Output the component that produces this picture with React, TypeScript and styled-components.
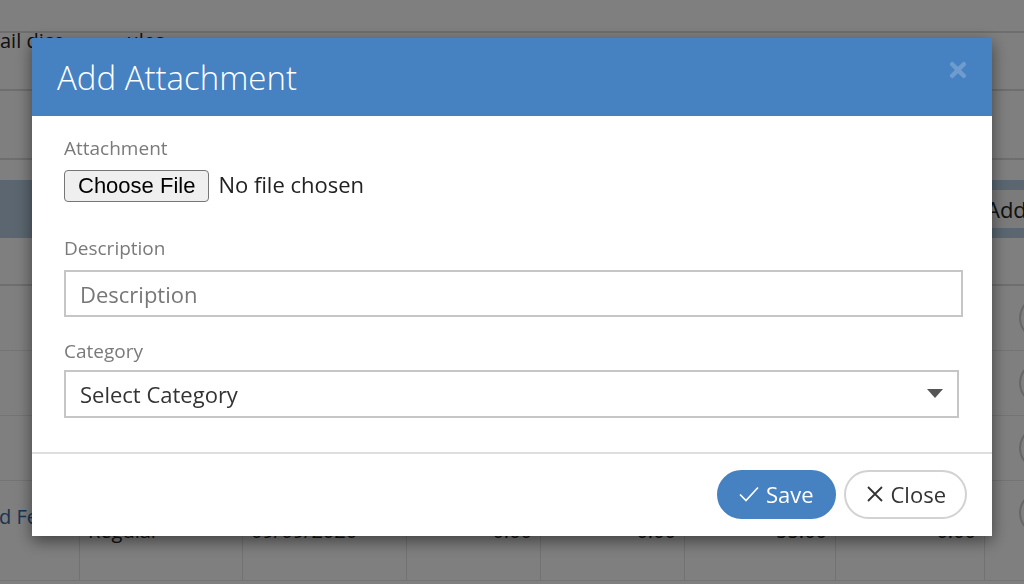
import styled, {createGlobalStyle} from "styled-components";
import {FaTimes} from "react-icons/fa";

const GlobalStyle = createGlobalStyle`
  * { box-sizing: border-box; }
  html, body { margin: 0; padding: 0; }
  body {
    font-family: "Open Sans", "Liberation Sans", sans-serif;
    background: #fff;
    color: #333;
    overflow: hidden;
  }
`;

/* ---------- page behind the modal ---------- */

const Page = styled.div`
  width: 1024px;
  height: 584px;
  overflow: hidden;
  display: flex;
  flex-direction: column;
`;

const TopRow = styled.div`
  height: 33px;
  border-bottom: 2px solid #dcdcdc;
`;

const InfoRow = styled.div<{$h: number}>`
  height: ${p => p.$h}px;
  border-bottom: 2px solid #dcdcdc;
  display: flex;
  align-items: flex-start;
  gap: 62px;
  font-size: 20px;
  line-height: 1;
  color: #222;
  span { margin-top: -2px; }
`;

const Toolbar = styled.div`
  margin-top: 20px;
  height: 58px;
  background: #b6cde0;
  display: flex;
  justify-content: flex-end;
  align-items: center;
`;

const AddButton = styled.div`
  width: 42px;
  height: 38px;
  background: #f6f6f6;
  border-radius: 4px 0 0 4px;
  font-size: 22px;
  line-height: 38px;
  padding-left: 4px;
  color: #222;
  overflow: hidden;
`;

const TableHead = styled.div`
  height: 48px;
  border-bottom: 2px solid #dcdcdc;
`;

const Row = styled.div<{$h?: number}>`
  height: ${p => p.$h ?? 65}px;
  display: grid;
  grid-template-columns: 80px 163px 164px 134px 144px 151px 149px 1fr;
  border-bottom: 1px solid #e8e8e8;
`;

const Cell = styled.div<{$right?: boolean}>`
  border-right: 1px solid #e4e4e4;
  padding: 0 8px;
  display: flex;
  align-items: center;
  justify-content: ${p => (p.$right ? "flex-end" : "flex-start")};
  font-size: 20px;
  color: #222;
  white-space: nowrap;
  overflow: hidden;
`;

const LinkCell = styled(Cell)`
  padding: 22px 0 0 0;
  align-items: flex-start;
  color: #2f6aa8;
  span { margin-left: -74px; }
`;

const RoundAction = styled.div`
  width: 44px;
  height: 44px;
  margin-left: 34px;
  margin-top: 10px;
  border-radius: 50%;
  border: 2px solid #cfcfcf;
`;

/* ---------- modal ---------- */

const Overlay = styled.div`
  position: fixed;
  inset: 0;
  background: rgba(0, 0, 0, 0.5);
  display: flex;
  justify-content: center;
  align-items: flex-start;
  padding-top: 38px;
`;

const Modal = styled.div`
  width: 960px;
  background: #fff;
  box-shadow: 0 5px 15px rgba(0, 0, 0, 0.5);
  display: flex;
  flex-direction: column;
`;

const Header = styled.div`
  height: 78px;
  background: #4681c2;
  display: flex;
  align-items: center;
  justify-content: space-between;
  padding: 0 22px 0 25px;
`;

const Title = styled.h4`
  margin: 0;
  font-size: 33px;
  font-weight: 300;
  color: #fff;
`;

const HeaderClose = styled.button`
  border: 0;
  background: none;
  padding: 0;
  display: flex;
  color: rgba(255, 255, 255, 0.22);
  margin-top: -14px;
`;

const Body = styled.div`
  padding: 19px 29px 34px 32px;
  display: flex;
  flex-direction: column;
`;

const FormGroup = styled.div<{$gap?: number}>`
  display: flex;
  flex-direction: column;
  margin-bottom: ${p => p.$gap ?? 19}px;
`;

const Label = styled.label<{$below?: number}>`
  font-size: 19px;
  line-height: 1.4;
  color: #7a7a7a;
  margin-bottom: ${p => p.$below ?? 7}px;
`;

const FileInput = styled.input`
  font-family: "Open Sans", sans-serif;
  font-size: 22px;
  color: #222;
  height: 34px;
  padding: 0;
  &::file-selector-button {
    font-family: "Liberation Sans", Arial, sans-serif;
    font-size: 22px;
    height: 32px;
    padding: 0 13px;
    margin: 0 9px 0 0;
    background: #efefef;
    border: 1px solid #767676;
    border-radius: 4px;
    color: #000;
  }
`;

const TextInput = styled.input`
  height: 47px;
  border: 2px solid #c6c6c6;
  padding: 0 14px;
  font-family: "Open Sans", sans-serif;
  font-size: 22px;
  color: #333;
  outline: none;
  &::placeholder { color: #777; }
`;

const SelectWrap = styled.div`
  position: relative;
  margin-right: 4px;
`;

const Select = styled.select`
  width: 100%;
  height: 48px;
  appearance: none;
  border: 2px solid #c6c6c6;
  border-radius: 0;
  background: #fff;
  padding: 0 14px;
  font-family: "Open Sans", sans-serif;
  font-size: 22px;
  color: #333;
  outline: none;
`;

const Caret = styled.svg`
  position: absolute;
  right: 16px;
  top: 19px;
  pointer-events: none;
`;

const Footer = styled.div`
  border-top: 2px solid #dedede;
  padding: 16px 25px 17px;
  display: flex;
  justify-content: flex-end;
  gap: 8px;
`;

const Button = styled.button<{$primary?: boolean}>`
  height: 49px;
  border-radius: 25px;
  padding: ${p => (p.$primary ? "0 20px" : "0 19px 0 21px")};
  display: flex;
  align-items: center;
  gap: ${p => (p.$primary ? 7 : 8)}px;
  font-family: "Open Sans", sans-serif;
  font-size: 22px;
  background: ${p => (p.$primary ? "#4681c2" : "#fff")};
  color: ${p => (p.$primary ? "#fff" : "#333")};
  border: 2px solid ${p => (p.$primary ? "#4681c2" : "#d2d2d2")};
  svg { flex: none; }
`;

const CheckIcon = () => (
  <svg width="20" height="16" viewBox="0 0 20 16" fill="none" stroke="currentColor" strokeWidth="1.7">
    <path d="M1 8.5l6 6L19 1.5" />
  </svg>
);

const CrossIcon = () => (
  <svg width="16" height="16" viewBox="0 0 16 16" fill="none" stroke="currentColor" strokeWidth="1.8">
    <path d="M1 1l14 14M15 1L1 15" />
  </svg>
);

const rows = [
  ["", "", "", "", "", "", ""],
  ["", "", "", "", "", "", ""],
  ["", "", "", "", "", "", ""],
  ["Standard Fee", "Regular", "09/09/2020", "0.00", "0.00", "55.00", "0.00"],
];

function App() {
  return (
    <>
      <GlobalStyle />
      <Page>
        <TopRow />
        <InfoRow $h={58}>
          <span>ail dice</span>
          <span>ules</span>
        </InfoRow>
        <InfoRow $h={69} />
        <Toolbar>
          <AddButton>Add</AddButton>
        </Toolbar>
        <TableHead />
        {rows.map((r, i) => (
          <Row key={i} $h={i === 3 ? 100 : 65}>
            <LinkCell>
              <span>{r[0]}</span>
            </LinkCell>
            <Cell>{r[1]}</Cell>
            <Cell>{r[2]}</Cell>
            <Cell $right>{r[3]}</Cell>
            <Cell $right>{r[4]}</Cell>
            <Cell $right>{r[5]}</Cell>
            <Cell $right>{r[6]}</Cell>
            <RoundAction />
          </Row>
        ))}
      </Page>

      <Overlay>
        <Modal>
          <Header>
            <Title>Add Attachment</Title>
            <HeaderClose>
              <FaTimes size={24} />
            </HeaderClose>
          </Header>
          <Body>
            <FormGroup $gap={32}>
              <Label>Attachment</Label>
              <FileInput type="file" />
            </FormGroup>
            <FormGroup $gap={21}>
              <Label $below={9}>Description</Label>
              <TextInput placeholder="Description" />
            </FormGroup>
            <FormGroup $gap={0}>
              <Label $below={5}>Category</Label>
              <SelectWrap>
                <Select defaultValue="">
                  <option value="">Select Category</option>
                </Select>
                <Caret width="16" height="9" viewBox="0 0 16 9">
                  <path d="M0 0h16L8 9z" fill="#555" />
                </Caret>
              </SelectWrap>
            </FormGroup>
          </Body>
          <Footer>
            <Button $primary>
              <CheckIcon />
              Save
            </Button>
            <Button>
              <CrossIcon />
              Close
            </Button>
          </Footer>
        </Modal>
      </Overlay>
    </>
  );
}

export default App;
